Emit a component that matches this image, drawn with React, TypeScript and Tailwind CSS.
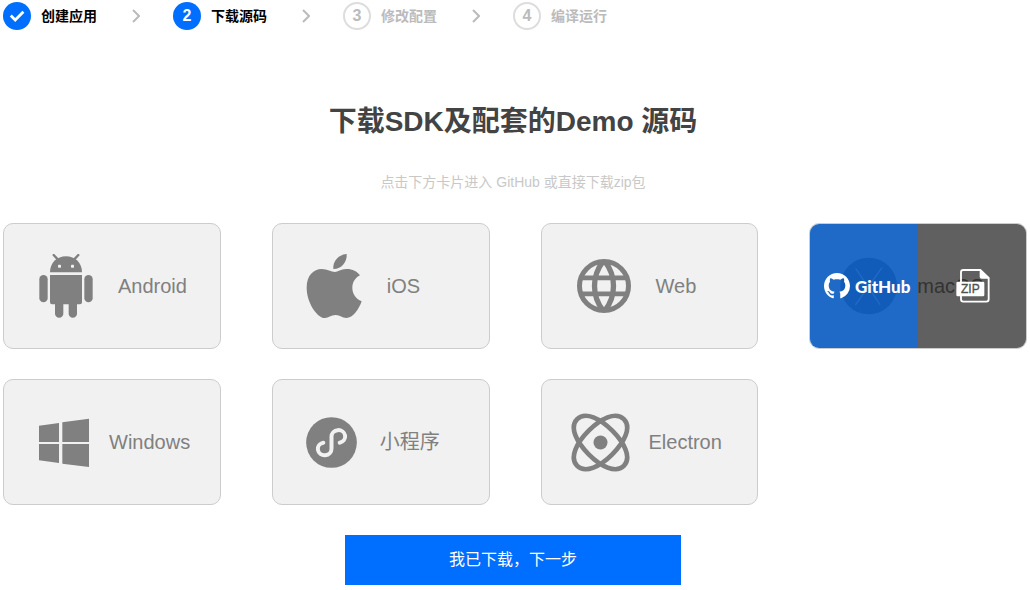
import type { ReactNode } from "react";

type Step = { label: string; state: "done" | "current" | "todo" };

const steps: Step[] = [
  { label: "创建应用", state: "done" },
  { label: "下载源码", state: "current" },
  { label: "修改配置", state: "todo" },
  { label: "编译运行", state: "todo" },
];

const badgeStyles = {
  done: "bg-[#006eff] text-white",
  current: "bg-[#006eff] text-white",
  todo: "border-2 border-[#ddd] text-[#bbb]",
};

function CheckIcon() {
  return (
    <svg className="size-7" viewBox="0 0 28 28" fill="none" stroke="currentColor" strokeWidth="2.8" aria-hidden="true">
      <path d="M7.8 13.6 12.2 18 20.4 9.8" />
    </svg>
  );
}

function Chevron() {
  return (
    <svg
      className="mr-[33px] ml-[35px] h-3.5 w-2 shrink-0 text-[#bbb]"
      viewBox="0 0 8 14"
      fill="none"
      stroke="currentColor"
      strokeWidth="2"
      aria-hidden="true"
    >
      <path d="M1 1 7 7 1 13" />
    </svg>
  );
}

function Steps() {
  return (
    <ol className="flex items-center pt-0.5">
      {steps.map((step, i) => (
        <li key={step.label} className="flex items-center" aria-current={step.state === "current" ? "step" : undefined}>
          {i > 0 && <Chevron />}
          <span
            className={`flex size-7 shrink-0 items-center justify-center rounded-full text-base leading-none font-bold ${badgeStyles[step.state]}`}
          >
            {step.state === "done" ? <CheckIcon /> : i + 1}
          </span>
          <span
            className={`ml-2.5 text-sm font-bold whitespace-nowrap ${step.state === "todo" ? "text-[#bbb]" : "text-black"}`}
          >
            {step.label}
          </span>
        </li>
      ))}
    </ol>
  );
}

function AndroidIcon() {
  return (
    <svg className="size-16 shrink-0" viewBox="99 117 192 192" fill="currentColor" aria-hidden="true">
      <path d="M150 172C150 143 171 124 198 124S246 143 246 172Z" />
      <path d="M161 120 174 134M235 120 222 134" stroke="currentColor" strokeWidth="7" strokeLinecap="round" />
      <path d="M150 180H246V262Q246 268 240 268H231V296A12.500 12.500 0 0 1 206 296V268H190V296A12.500 12.500 0 0 1 165 296V268H156Q150 268 150 262Z" />
      <rect x="118" y="180" width="25" height="82" rx="12.500" />
      <rect x="253" y="180" width="25" height="82" rx="12.500" />
      <rect x="174" y="149" width="9" height="9" rx="2" fill="#f1f1f1" />
      <rect x="213" y="149" width="9" height="9" rx="2" fill="#f1f1f1" />
    </svg>
  );
}

function AppleIcon() {
  return (
    <svg className="size-16 shrink-0" viewBox="111 117 192 192" fill="currentColor" aria-hidden="true">
      <path d="M245 117C247 142 228 163 205 162C202 139 222 118 245 117Z" />
      <path d="M210 171C198 171 188 162 170 162C146 162 125 181 125 218C125 262 156 309 180 309C191 309 197 300 212 300C226 300 231 309 244 309C264 309 282 282 290 259C272 251 262 236 262 219C262 202 270 189 285 181C276 168 260 161 243 162C228 162 218 171 210 171Z" />
    </svg>
  );
}

function GlobeIcon() {
  return (
    <svg
      className="size-16 shrink-0"
      viewBox="108 117 192 192"
      fill="none"
      stroke="currentColor"
      strokeWidth="15"
      aria-hidden="true"
    >
      <circle cx="207" cy="213" r="73.500" />
      <path d="M204 140C170 183 170 243 204 286M210 140C244 183 244 243 210 286" strokeWidth="16" />
      <path d="M138 188.500H276M138 236.500H276" strokeWidth="14" />
    </svg>
  );
}

function MacIcon() {
  return (
    <svg className="h-16 w-[60px] shrink-0" viewBox="118 117 180 192" aria-hidden="true">
      <circle cx="207" cy="213" r="85" fill="currentColor" />
      <path d="M168 160 241 269M247 158 167 270" fill="none" stroke="#f1f1f1" strokeWidth="4" />
    </svg>
  );
}

function WindowsIcon() {
  return (
    <svg className="h-16 w-[60px] shrink-0" viewBox="99 114 180 192" fill="currentColor" aria-hidden="true">
      <path d="M117 161 177 153V210H117ZM187 151 267 140V210H187ZM117 216H177V273L117 265ZM187 216H267V285L187 275Z" />
    </svg>
  );
}

function MiniProgramIcon() {
  return (
    <svg className="h-16 w-[60px] shrink-0" viewBox="111 114 180 192" aria-hidden="true">
      <circle cx="199.500" cy="211.500" r="76" fill="currentColor" />
      <path
        d="M175 212A20.500 19 0 1 0 199.500 230V194A20.500 19 0 1 1 224 212"
        fill="none"
        stroke="#f1f1f1"
        strokeWidth="12"
        strokeLinecap="round"
      />
    </svg>
  );
}

const orbit = "M-99 0C-99-35-50-50 0-50S99-35 99 0 50 50 0 50-99 35-99 0Z";

function ElectronIcon() {
  return (
    <svg
      className="h-16 w-[60px] shrink-0"
      viewBox="108 114 180 192"
      fill="none"
      stroke="currentColor"
      strokeWidth="14"
      aria-hidden="true"
    >
      <path d={orbit} transform="translate(196.500 211.500) rotate(45)" />
      <path d={orbit} transform="translate(196.500 211.500) rotate(-45)" />
      <circle cx="196.500" cy="211.500" r="21" fill="currentColor" stroke="none" />
    </svg>
  );
}

function GitHubMark() {
  return (
    <svg className="size-[26px] shrink-0" viewBox="0 0 16 16" fill="currentColor" aria-hidden="true">
      <path d="M8 0C3.58 0 0 3.58 0 8c0 3.54 2.29 6.53 5.47 7.59.4.07.55-.17.55-.38 0-.19-.01-.82-.01-1.49-2.01.37-2.53-.49-2.69-.94-.09-.23-.48-.94-.82-1.13-.28-.15-.68-.52-.01-.53.63-.01 1.08.58 1.23.82.72 1.21 1.87.87 2.33.66.07-.52.28-.87.51-1.07-1.78-.2-3.64-.89-3.64-3.95 0-.87.31-1.59.82-2.15-.08-.2-.36-1.02.08-2.12 0 0 .67-.21 2.2.82.64-.18 1.32-.27 2-.27s1.36.09 2 .27c1.53-1.04 2.2-.82 2.2-.82.44 1.1.16 1.92.08 2.12.51.56.82 1.27.82 2.15 0 3.07-1.87 3.75-3.65 3.95.29.25.54.73.54 1.48 0 1.07-.01 1.93-.01 2.2 0 .21.15.46.55.38A8.01 8.01 0 0 0 16 8c0-4.42-3.58-8-8-8Z" />
    </svg>
  );
}

function ZipIcon() {
  return (
    <svg className="h-[34px] w-[34px] shrink-0" viewBox="467 164 102 102" aria-hidden="true">
      <path
        d="M482 204V174Q482 167 489 167H540L565 191V255Q565 262 558 262H489Q482 262 482 255V244"
        fill="none"
        stroke="#fff"
        strokeWidth="5.5"
      />
      <path d="M538 166 567 193H544Q538 193 538 187Z" fill="#fff" />
      <rect x="468" y="202" width="84" height="44" rx="4" fill="#fff" />
      <text x="510" y="237" textAnchor="middle" fontSize="36" fill="#505050" stroke="#505050" strokeWidth="1">
        ZIP
      </text>
    </svg>
  );
}

function DownloadOptions() {
  return (
    <div className="absolute inset-0 grid grid-cols-2 text-white">
      <a href="#github" className="flex items-center justify-center gap-[5px] bg-[#0056c0]/87 pl-1.5">
        <GitHubMark />
        <span className="font-[Lato,sans-serif] text-[17px] leading-none font-black">GitHub</span>
      </a>
      <a href="#zip" className="flex items-center justify-center bg-black/60 pl-0.5" aria-label="ZIP">
        <ZipIcon />
      </a>
    </div>
  );
}

type Platform = { name: string; icon: ReactNode; gap: string; active?: boolean };

const platforms: Platform[] = [
  { name: "Android", icon: <AndroidIcon />, gap: "gap-[21px]" },
  { name: "iOS", icon: <AppleIcon />, gap: "gap-[21px]" },
  { name: "Web", icon: <GlobeIcon />, gap: "gap-[21px]" },
  { name: "macOS", icon: <MacIcon />, gap: "gap-[18px]", active: true },
  { name: "Windows", icon: <WindowsIcon />, gap: "gap-4" },
  { name: "小程序", icon: <MiniProgramIcon />, gap: "gap-[18px]" },
  { name: "Electron", icon: <ElectronIcon />, gap: "gap-[18px]" },
];

function PlatformCard({ name, icon, gap, active }: Platform) {
  return (
    <li
      className={`relative flex items-center overflow-hidden rounded-[10px] border border-[#ccc] bg-[#f1f1f1] py-[30px] pl-[29px] text-[#808080] ${gap}`}
    >
      {icon}
      <span className="text-xl whitespace-nowrap">{name}</span>
      {active && <DownloadOptions />}
    </li>
  );
}

export default function App() {
  return (
    <main className="bg-white px-[3px] pb-[5px] font-['Liberation_Sans','Noto_Sans_CJK_SC',sans-serif]">
      <Steps />
      <header className="pt-[72px] pr-1 text-center">
        <h1 className="text-[28px] leading-10 font-bold text-[#434343]">下载SDK及配套的Demo 源码</h1>
        <p className="mt-[30px] text-sm leading-5 text-[#c8c8c8]">点击下方卡片进入 GitHub 或直接下载zip包</p>
      </header>
      <ul className="mt-[31px] grid grid-cols-4 gap-x-[51px] gap-y-[30px]">
        {platforms.map((platform) => (
          <PlatformCard key={platform.name} {...platform} />
        ))}
      </ul>
      <div className="mt-[30px] flex justify-center pr-1">
        <button type="button" className="h-[50px] w-[336px] bg-[#006eff] text-base text-white">
          我已下载，下一步
        </button>
      </div>
    </main>
  );
}
